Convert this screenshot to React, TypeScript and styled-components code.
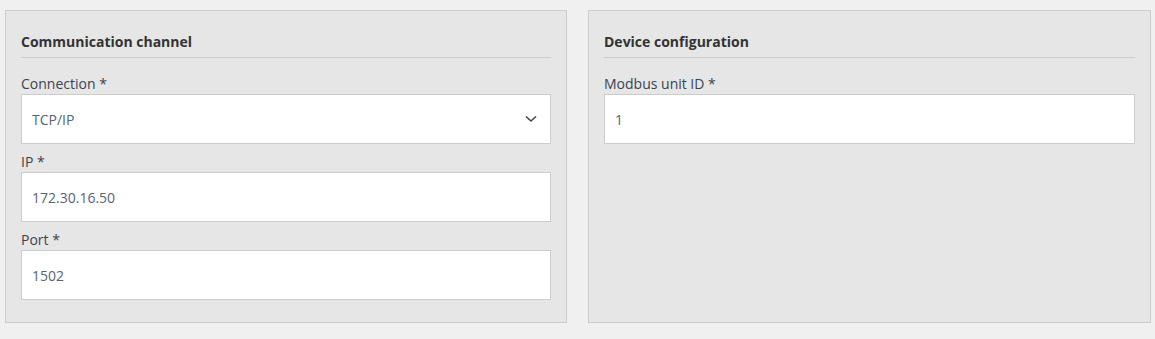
import React from 'react';
import styled, { createGlobalStyle } from 'styled-components';

const GlobalStyle = createGlobalStyle`
  body {
    margin: 0;
    background: #f0f0f0;
    font-family: "Open Sans", "Liberation Sans", sans-serif;
  }
`;

const Page = styled.div`
  display: grid;
  grid-template-columns: 562px 563px;
  gap: 21px;
  padding: 10px 4px 16px 5px;
`;

const Panel = styled.section`
  background: #e6e6e6;
  border: 1px solid #cccccc;
  padding: 15px 15px 22px;
`;

const Heading = styled.h3`
  margin: 0 0 14px;
  padding: 6px 0 5px;
  font-size: 14px;
  line-height: 20px;
  font-weight: 700;
  color: #333333;
  border-bottom: 1px solid #cccccc;
`;

const Field = styled.div`
  & + & {
    margin-top: 6px;
  }
`;

const Label = styled.label`
  display: block;
  padding-top: 1px;
  font-size: 14px;
  line-height: 21px;
  color: #3b4350;
`;

const InputBox = styled.div`
  position: relative;
  display: flex;
  align-items: center;
  height: 48px;
  padding: 0 10px;
  background: #ffffff;
  border: 1px solid #cccccc;
  font-size: 14px;
  color: #566475;
`;

const Chevron = styled.svg`
  position: absolute;
  right: 13px;
  top: 50%;
  transform: translateY(-50%);
`;

type FieldProps = { label: string; value: string; select?: boolean };

const FormField = ({ label, value, select }: FieldProps) => (
  <Field>
    <Label>{label}</Label>
    <InputBox>
      {value}
      {select && (
        <Chevron width="12" height="8" viewBox="0 0 12 8">
          <path d="M1 1.5 L6 6 L11 1.5" fill="none" stroke="#444" strokeWidth="1.6" />
        </Chevron>
      )}
    </InputBox>
  </Field>
);

export default function App() {
  return (
    <>
      <GlobalStyle />
      <Page>
        <Panel>
          <Heading>Communication channel</Heading>
          <FormField label="Connection *" value="TCP/IP" select />
          <FormField label="IP *" value="172.30.16.50" />
          <FormField label="Port *" value="1502" />
        </Panel>
        <Panel>
          <Heading>Device configuration</Heading>
          <FormField label="Modbus unit ID *" value="1" />
        </Panel>
      </Page>
    </>
  );
}
